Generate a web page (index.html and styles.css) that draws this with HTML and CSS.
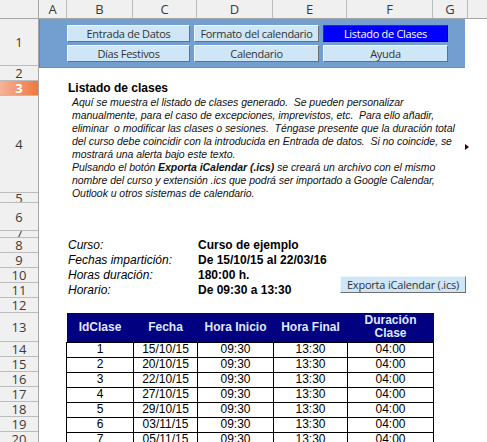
FILE: index.html
```
<!DOCTYPE html>
<html lang="es">
<head>
<meta charset="utf-8">
<title>Listado de Clases</title>
<link rel="stylesheet" href="styles.css">
</head>
<body>
<div class="sheet">
  <div class="corner"></div>
  <div class="colhead">
    <div class="ch ca">A</div>
    <div class="ch cb">B</div>
    <div class="ch cc">C</div>
    <div class="ch cd">D</div>
    <div class="ch ce">E</div>
    <div class="ch cf">F</div>
    <div class="ch cg">G</div>
    <div class="ch chh"></div>
  </div>
  <div class="rowhead">
    <div class="rh h47">1</div>
    <div class="rh h15">2</div>
    <div class="rh h15 sel">3</div>
    <div class="rh h97">4</div>
    <div class="rh h10">5</div>
    <div class="rh h28">6</div>
    <div class="rh h7">7</div>
    <div class="rh h15">8</div>
    <div class="rh h15">9</div>
    <div class="rh h15">10</div>
    <div class="rh h15">11</div>
    <div class="rh h15">12</div>
    <div class="rh h29">13</div>
    <div class="rh h15">14</div>
    <div class="rh h15">15</div>
    <div class="rh h15">16</div>
    <div class="rh h15">17</div>
    <div class="rh h15">18</div>
    <div class="rh h15">19</div>
    <div class="rh h15">20</div>
  </div>
  <div class="content">
    <div class="panel">
      <div class="btns">
        <div class="btn">Entrada de Datos</div>
        <div class="btn">Formato del calendario</div>
        <div class="btn active">Listado de Clases</div>
        <div class="btn">Días Festivos</div>
        <div class="btn">Calendario</div>
        <div class="btn">Ayuda</div>
      </div>
    </div>
    <div class="intro">
      <div class="title">Listado de clases</div>
      <div class="desc">
        <span>Aquí se muestra el listado de clases generado.  Se pueden personalizar</span>
        <span>manualmente, para el caso de excepciones, imprevistos, etc.  Para ello añadir,</span>
        <span>eliminar  o modificar las clases o sesiones.  Téngase presente que la duración total</span>
        <span>del curso debe coincidir con la introducida en Entrada de datos.  Si no coincide, se</span>
        <span>mostrará una alerta bajo este texto.</span>
        <span>Pulsando el botón <b>Exporta iCalendar (.ics)</b> se creará un archivo con el mismo</span>
        <span>nombre del curso y extensión .ics que podrá ser importado a Google Calendar,</span>
        <span>Outlook u otros sistemas de calendario.</span>
      </div>
    </div>
    <div class="info">
      <div class="lbl">Curso:</div><div class="val">Curso de ejemplo</div>
      <div class="lbl">Fechas impartición:</div><div class="val">De 15/10/15 al 22/03/16</div>
      <div class="lbl">Horas duración:</div><div class="val">180:00 h.</div>
      <div class="lbl">Horario:</div><div class="val">De 09:30 a 13:30</div>
      <div class="export">Exporta iCalendar (.ics)</div>
    </div>
    <table class="list">
      <colgroup>
        <col class="w1"><col class="w2"><col class="w3"><col class="w4"><col class="w5">
      </colgroup>
      <thead>
        <tr class="hd"><th>IdClase</th><th>Fecha</th><th>Hora Inicio</th><th>Hora Final</th><th>Duración<br>Clase</th></tr>
      </thead>
      <tbody>
        <tr><td>1</td><td>15/10/15</td><td>09:30</td><td>13:30</td><td>04:00</td></tr>
        <tr><td>2</td><td>20/10/15</td><td>09:30</td><td>13:30</td><td>04:00</td></tr>
        <tr><td>3</td><td>22/10/15</td><td>09:30</td><td>13:30</td><td>04:00</td></tr>
        <tr><td>4</td><td>27/10/15</td><td>09:30</td><td>13:30</td><td>04:00</td></tr>
        <tr><td>5</td><td>29/10/15</td><td>09:30</td><td>13:30</td><td>04:00</td></tr>
        <tr><td>6</td><td>03/11/15</td><td>09:30</td><td>13:30</td><td>04:00</td></tr>
        <tr><td>7</td><td>05/11/15</td><td>09:30</td><td>13:30</td><td>04:00</td></tr>
      </tbody>
    </table>
    <span class="marker"></span>
  </div>
</div>
</body>
</html>
```
FILE: styles.css
```
html, body {
  margin: 0;
  padding: 0;
  background: #ffffff;
}
body {
  width: 487px;
  height: 442px;
  overflow: hidden;
  font-family: "Liberation Sans", Arial, sans-serif;
  color: #000;
}
.sheet {
  display: grid;
  grid-template-columns: 39px 448px;
  grid-template-rows: 19px 423px;
}
.corner {
  background: #f0f0f0;
  border-right: 1px solid #a6a6a6;
  border-bottom: 1px solid #a6a6a6;
  box-sizing: border-box;
}
.colhead {
  display: flex;
  background: #f0f0f0;
  border-bottom: 1px solid #a6a6a6;
  box-sizing: border-box;
  overflow: hidden;
}
.ch {
  flex: none;
  box-sizing: border-box;
  border-right: 1px solid #bcbcbc;
  font-family: "Open Sans", "DejaVu Sans", sans-serif;
  font-size: 13px;
  line-height: 18px;
  color: #3a3a3a;
  text-align: center;
}
.ca { width: 28px; }
.cb { width: 66px; }
.cc { width: 64px; }
.cd { width: 76px; }
.ce { width: 74px; }
.cf { width: 86px; }
.cg { width: 35px; }
.chh { flex: 1; border-right: 0; }

.rowhead {
  background: #f0f0f0;
  border-right: 1px solid #a6a6a6;
  box-sizing: border-box;
  overflow: hidden;
}
.rh {
  box-sizing: border-box;
  border-bottom: 1px solid #bcbcbc;
  display: flex;
  align-items: center;
  justify-content: center;
  overflow: hidden;
  font-family: "Open Sans", "DejaVu Sans", sans-serif;
  font-size: 13px;
  line-height: 14px;
  color: #3a3a3a;
}
.h7 { height: 7px; }
.h10 { height: 10px; }
.h15 { height: 15px; }
.h28 { height: 28px; }
.h29 { height: 29px; }
.h47 { height: 47px; }
.h97 { height: 97px; }
.rh.sel {
  background: linear-gradient(to right, #f6b298, #ee7840);
  color: #ffffff;
  font-weight: bold;
}

.content {
  position: relative;
  overflow: hidden;
}
.panel {
  width: 426px;
  height: 49px;
  box-sizing: border-box;
  background: #729fcf;
  border-left: 1px solid #5e89bc;
  border-bottom: 1px solid #6790c2;
  padding: 6px 0 0 27px;
}
.btns {
  display: grid;
  grid-template-columns: 123px 125px 125px;
  grid-auto-rows: 17px;
  column-gap: 4px;
  row-gap: 3px;
}
.btn, .export {
  box-sizing: border-box;
  background: #cfe6f6;
  border: 1px solid;
  border-color: #eef7fd #6f6f6f #6f6f6f #eef7fd;
  font-family: "Open Sans", "DejaVu Sans", sans-serif;
  font-size: 11px;
  letter-spacing: -0.3px;
  line-height: 15px;
  color: #333333;
  text-align: center;
  white-space: nowrap;
  overflow: hidden;
}
.export {
  letter-spacing: -0.2px;
}
.btn.active {
  background: #0000ff;
  color: #ffffff;
  border-color: #2020ff #00005a #00005a #2020ff;
}

.intro {
  margin: 13px 0 0 29px;
}
.title {
  font-weight: bold;
  font-size: 12px;
  line-height: 15px;
}
.desc {
  margin-left: 4px;
  font-style: italic;
  font-size: 10.5px;
  letter-spacing: -0.05px;
  line-height: 13px;
  color: #111;
}
.desc span {
  display: block;
  white-space: pre;
}

.info {
  margin: 38px 0 0 29px;
  display: grid;
  grid-template-columns: 130px 142px 126px;
  grid-template-rows: repeat(4, 15px);
  font-size: 12px;
  line-height: 15px;
}
.lbl { font-style: italic; grid-column: 1; }
.val { font-weight: bold; grid-column: 2; white-space: nowrap; }
.export {
  grid-column: 3;
  grid-row: 3 / span 2;
  margin-top: 8px;
  height: 17px;
}

.list {
  margin: 15px 0 0 27px;
  border-collapse: collapse;
  table-layout: fixed;
  width: 367px;
  font-size: 12px;
}
.w1 { width: 67px; }
.w2 { width: 64px; }
.w3 { width: 76px; }
.w4 { width: 74px; }
.w5 { width: 86px; }
.list th {
  background: #000080;
  color: #dfe8ff;
  font-weight: bold;
  padding: 0;
  line-height: 13px;
}
.list tr.hd { height: 29px; }
.list tbody tr { height: 15px; }
.list td {
  border: 1px solid #000;
  padding: 0;
  text-align: center;
  line-height: 13px;
}
.marker {
  position: absolute;
  left: 426px;
  top: 125px;
  width: 0;
  height: 0;
  border-left: 4px solid #3a0000;
  border-top: 3px solid transparent;
  border-bottom: 3px solid transparent;
}
```
